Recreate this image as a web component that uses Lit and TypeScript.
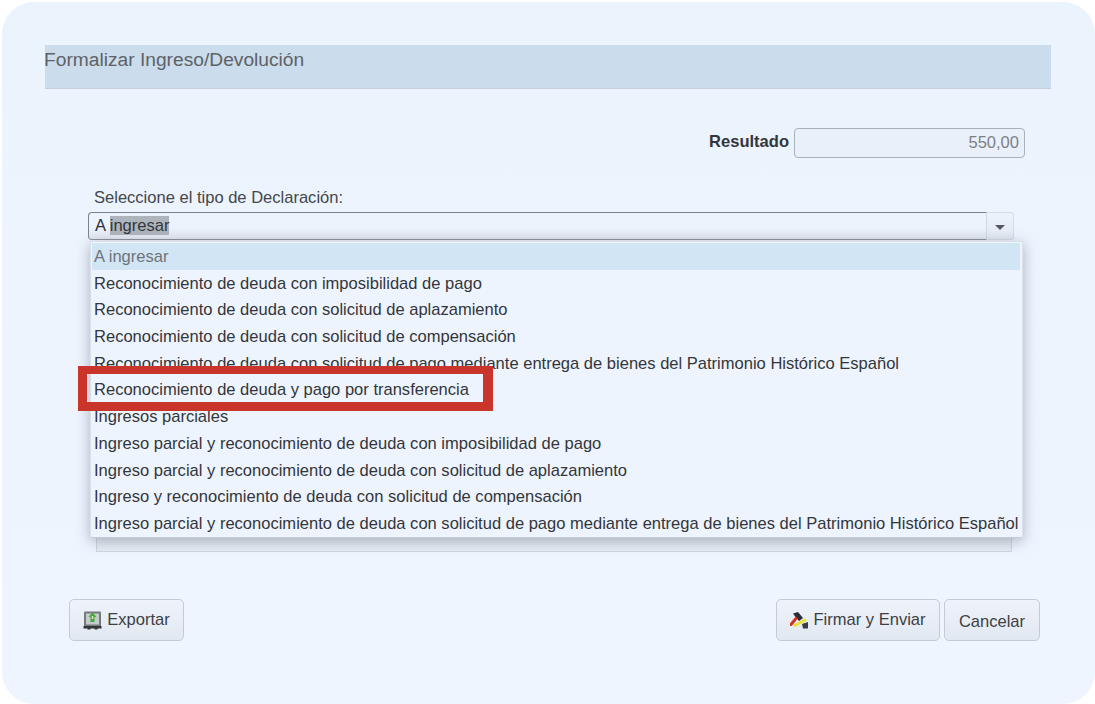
import { LitElement, html, css } from "lit";
import { customElement } from "lit/decorators.js";

const OPTIONS = [
  "A ingresar",
  "Reconocimiento de deuda con imposibilidad de pago",
  "Reconocimiento de deuda con solicitud de aplazamiento",
  "Reconocimiento de deuda con solicitud de compensación",
  "Reconocimiento de deuda con solicitud de pago mediante entrega de bienes del Patrimonio Histórico Español",
  "Reconocimiento de deuda y pago por transferencia",
  "Ingresos parciales",
  "Ingreso parcial y reconocimiento de deuda con imposibilidad de pago",
  "Ingreso parcial y reconocimiento de deuda con solicitud de aplazamiento",
  "Ingreso y reconocimiento de deuda con solicitud de compensación",
  "Ingreso parcial y reconocimiento de deuda con solicitud de pago mediante entrega de bienes del Patrimonio Histórico Español",
];

@customElement("app-root")
export class AppRoot extends LitElement {
  static styles = css`
    :host {
      display: block;
      width: 1095px;
      height: 704px;
      background: #fff;
      font-family: "Liberation Sans", Arial, sans-serif;
      font-size: 16.55px;
      color: #3c3f44;
    }
    .panel {
      box-sizing: border-box;
      height: 702px;
      margin: 2px 0 0 2px;
      padding: 43px 44px 0 43px;
      background: linear-gradient(#ebf3fd, #eff5ff);
      border-radius: 32px;
      display: flex;
      flex-direction: column;
    }
    .title {
      height: 44px;
      background: #cbdcec;
      border-bottom: 1px solid #c4d0dc;
      box-sizing: border-box;
      font-size: 19.2px;
      line-height: 30px;
      color: #5e6266;
      text-indent: -1px;
      white-space: nowrap;
    }
    .result {
      display: flex;
      justify-content: flex-end;
      align-items: center;
      gap: 5px;
      margin: 39px 26px 0 0;
    }
    .result label {
      font-weight: bold;
      color: #33363a;
      position: relative;
      top: -1px;
    }
    .result-value {
      box-sizing: border-box;
      width: 231px;
      height: 30px;
      border: 1px solid #a9b1ba;
      border-radius: 4px;
      background: #e9f0fa;
      color: #7d8186;
      text-align: right;
      line-height: 27px;
      padding-right: 5px;
    }
    .form {
      margin: 30px 37px 0 43px;
      position: relative;
    }
    .form-label {
      height: 24px;
      line-height: 20px;
      padding-left: 6px;
      color: #44474b;
    }
    .combo {
      display: flex;
      height: 28px;
      box-sizing: border-box;
    }
    .combo-input {
      flex: 1;
      box-sizing: border-box;
      border: 1px solid #7c8288;
      border-right-color: #ced6e0;
      border-bottom-color: #8d9298;
      border-radius: 4px 0 0 4px;
      background: linear-gradient(#edf3fc 50%, #e2e8f1);
      padding-left: 6px;
      line-height: 25px;
      color: #2c2f33;
    }
    .combo-input .selected {
      background: #aeb4bb;
      color: #33363a;
    }
    .combo-arrow {
      width: 27px;
      box-sizing: border-box;
      border: 1px solid #d5dce6;
      border-left: none;
      border-radius: 0 3px 3px 0;
      background: linear-gradient(#edf3fb, #e3e9f2);
      display: flex;
      align-items: center;
      justify-content: center;
    }
    .combo-arrow i {
      width: 0;
      height: 0;
      margin-top: 2px;
      border-left: 5px solid transparent;
      border-right: 5px solid transparent;
      border-top: 5px solid #55585d;
    }
    .menu {
      position: absolute;
      z-index: 2;
      left: 2px;
      top: 53px;
      width: 933px;
      height: 297px;
      box-sizing: border-box;
      padding: 1px 2px 0 1px;
      background: #edf4fe;
      border: 1px solid #d9e0e9;
      border-bottom-color: #c5ccd6;
      border-radius: 2px;
      box-shadow: 0 3px 14px rgba(70, 80, 95, 0.4);
    }
    .option {
      height: 26.7px;
      line-height: 27.5px;
      padding-left: 2px;
      white-space: nowrap;
      color: #33363a;
    }
    .option.current {
      background: #d2e5f5;
      color: #6f7378;
    }
    .mark {
      position: absolute;
      z-index: 3;
      left: -10px;
      top: 178px;
      width: 415px;
      height: 45px;
      box-sizing: border-box;
      border: solid #c9352b;
      border-width: 8px 10px 9px 9px;
    }
    .behind {
      box-sizing: border-box;
      height: 36px;
      margin: 276px 2px 0 8px;
      border: 1px solid #cfd6df;
      border-top: none;
      background: #e6ecf5;
    }
    .actions {
      display: flex;
      align-items: center;
      gap: 4px;
      margin: 47px 11px 0 24px;
    }
    .spacer {
      flex: 1;
    }
    button {
      box-sizing: border-box;
      height: 42px;
      display: flex;
      align-items: center;
      justify-content: center;
      gap: 5px;
      font: inherit;
      color: #3c3f44;
      border: 1px solid #c3cbd6;
      border-radius: 5px;
      background: linear-gradient(#eef3fb, #e2e8f1);
      padding: 0;
    }
    .export { width: 115px; }
    .sign { width: 164px; }
    .cancel { width: 96px; }
    .cancel span {
      position: relative;
      top: 2px;
    }
  `;

  render() {
    return html`
      <div class="panel">
        <div class="title">Formalizar Ingreso/Devolución</div>
        <div class="result">
          <label>Resultado</label>
          <div class="result-value">550,00</div>
        </div>
        <div class="form">
          <div class="form-label">Seleccione el tipo de Declaración:</div>
          <div class="combo">
            <div class="combo-input">A <span class="selected">ingresar</span></div>
            <div class="combo-arrow"><i></i></div>
          </div>
          <div class="menu">
            ${OPTIONS.map(
              (o, i) => html`<div class="option ${i === 0 ? "current" : ""}">${o}</div>`
            )}
          </div>
          <div class="mark"></div>
          <div class="behind"></div>
        </div>
        <div class="actions">
          <button class="export">
            <svg width="19" height="19" viewBox="0 0 19 19">
              <rect x="1" y="0.5" width="17" height="15" rx="1" fill="#74797c" />
              <rect x="3" y="2.5" width="13" height="11" fill="#c3cbcb" />
              <path d="M9.5 1.5l4 4.5h-2v5h-4v-5h-2z" fill="#45a83e" />
              <rect x="8.800" y="5" width="1.400" height="3" fill="#e6f2b4" />
              <path d="M0.500 15h18v2.500h-4v1h-3v-1h-4v1h-3v-1h-4z" fill="#33373a" />
            </svg>
            <span>Exportar</span>
          </button>
          <div class="spacer"></div>
          <button class="sign">
            <svg width="18" height="17" viewBox="0 0 18 17">
              <path d="M3 1.500l5-1.500 5 6-4 3-3.500-4z" fill="#2b2e32" />
              <path d="M1 12.500l5-6" stroke="#d8301f" stroke-width="3" stroke-linecap="round" fill="none" />
              <path d="M4 14l12-6.500" stroke="#e9e238" stroke-width="3" fill="none" />
              <path d="M12 12l6-2v6.500h-5z" fill="#3a3d41" />
            </svg>
            <span>Firmar y Enviar</span>
          </button>
          <button class="cancel"><span>Cancelar</span></button>
        </div>
      </div>
    `;
  }
}
